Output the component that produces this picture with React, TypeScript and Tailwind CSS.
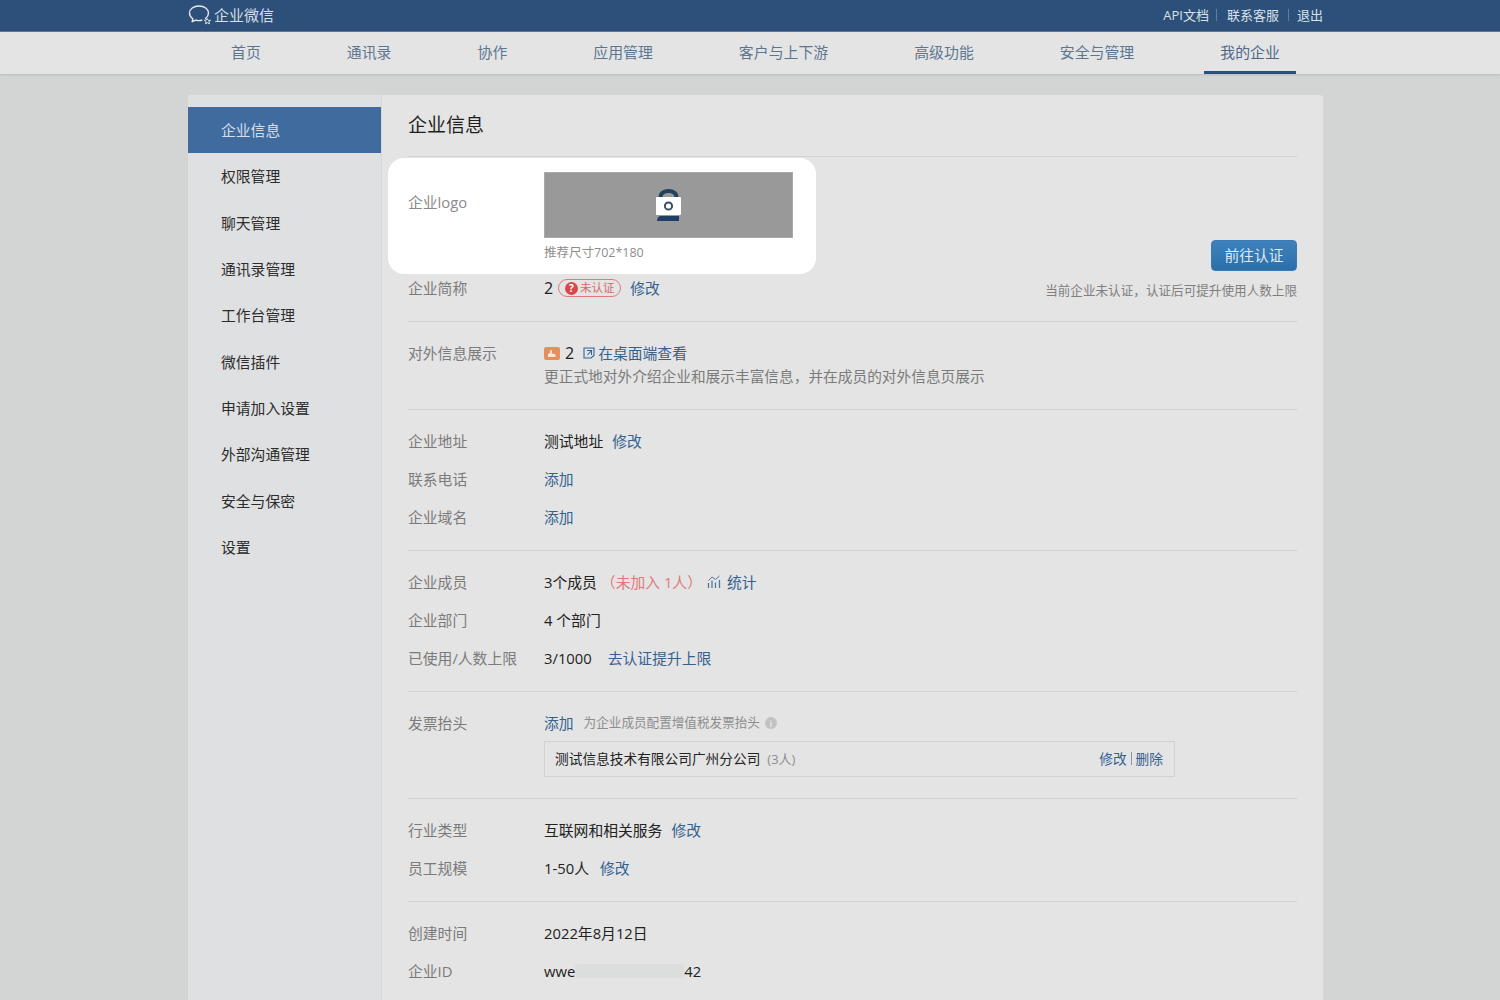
import type { ReactNode } from 'react'

const navItems = ['首页', '通讯录', '协作', '应用管理', '客户与上下游', '高级功能', '安全与管理', '我的企业']
const sideItems = ['企业信息', '权限管理', '聊天管理', '通讯录管理', '工作台管理', '微信插件', '申请加入设置', '外部沟通管理', '安全与保密', '设置']

function Row({ label, children }: { label: string; children: ReactNode }) {
  return (
    <div className="flex h-[38px] items-center">
      <div className="w-[136px] shrink-0 text-[#7b7b7b]">{label}</div>
      <div className="flex items-center text-[#222]">{children}</div>
    </div>
  )
}

function A({ children, className = '' }: { children: ReactNode; className?: string }) {
  return <a className={`text-[#33628f] ${className}`}>{children}</a>
}

function WorkLogo() {
  return (
    <svg width="24" height="22" viewBox="0 0 24 22" fill="none" stroke="#e6ebf1" strokeWidth="1.4" className="shrink-0">
      <path d="M17.5 14.5c2-1.6 3-3.5 3-5.6C20.5 4.900 16.300 2 11 2S1.500 4.900 1.500 9c0 2.300 1.300 4.300 3.300 5.700l-.6 3 3.300-1.600c1.100.3 2.300.5 3.500.5 1 0 1.900-.1 2.800-.3" strokeLinecap="round" strokeLinejoin="round" />
      <path d="M19 14.500l1.500 2 2-.3-1.500 1.600.4 2-1.900-1.100-1.900 1.100.4-2-1.500-1.600 2-.3z" strokeWidth="1" strokeLinejoin="round" />
    </svg>
  )
}

function CameraMark() {
  return (
    <svg width="25" height="32" viewBox="0 0 25 32">
      <path d="M4.500 10V8.500C4.500 4 8 2 12.500 2S20.500 4 20.500 8.500V10" fill="none" stroke="#24405f" strokeWidth="4" />
      <path d="M1 32c0-3 1.500-5 4-5h18v5z" fill="#1f3f64" />
      <rect x="0" y="8" width="25" height="18" rx="1" fill="#fff" />
      <circle cx="12.500" cy="17" r="3.600" fill="none" stroke="#3b4f66" strokeWidth="2" />
    </svg>
  )
}

function ChartIcon() {
  return (
    <svg width="15" height="14" viewBox="0 0 15 14" fill="none" stroke="#54779b" strokeWidth="1.300" className="mr-[5px]">
      <path d="M1.500 13V8M5 13V5.500M8.500 13V7.500M12.500 13V5" />
      <path d="M1.500 5.500L5 2l3.500 2.500L12.500 1" strokeWidth="1" />
    </svg>
  )
}

function LinkOutIcon() {
  return (
    <svg width="12" height="12" viewBox="0 0 12 12" fill="none" stroke="#2f6496" strokeWidth="1.100" className="mr-[3px]">
      <path d="M1 1h10v7.500L8 11H1z" />
      <path d="M4 3.500h4.500V8M8.500 3.500L4.500 8" />
    </svg>
  )
}

function ProfileBadge() {
  return (
    <svg width="16" height="13" viewBox="0 0 16 13" className="mr-[5px]">
      <rect width="16" height="13" rx="2" fill="#e98d5f" />
      <path d="M4 10V7l2-1V3.500L8 3v3.500L11.500 7.500V10z" fill="#fbe6da" />
    </svg>
  )
}

export default function App() {
  return (
    <div className="h-[1000px] overflow-hidden bg-[#d3d5d4] text-[14.8px] leading-[22px] font-['Open_Sans','Noto_Sans_CJK_SC',sans-serif]">
      <header className="h-[32px] bg-[#2c5079] border-b border-[#5b7a9b]">
        <div className="ml-[188px] flex h-[29px] w-[1135px] items-center justify-between">
          <div className="flex items-center gap-[2px] text-[#d5dde6]">
            <WorkLogo />
            <span className="text-[15px]">企业微信</span>
          </div>
          <div className="flex items-center text-[13px] text-[#d9e1ea]">
            <span>API文档</span>
            <span className="mx-[7px] h-[12px] w-px bg-[#5f7d9d]" />
            <span className="ml-[3px]">联系客服</span>
            <span className="ml-[9px] mr-[8px] h-[12px] w-px bg-[#5f7d9d]" />
            <span>退出</span>
          </div>
        </div>
      </header>

      <nav className="flex h-[42px] gap-[54px] bg-[#e4e4e4] pl-[215px] text-[14.9px] shadow-[0_1px_2px_rgba(0,0,0,0.12)]">
        {navItems.map((item) => (
          <a
            key={item}
            className={`flex h-full items-center whitespace-nowrap border-b-[3px] px-4 text-[#5d7690] ${
              item === '我的企业' ? 'border-[#2c5079] text-[#50698a]' : 'border-transparent'
            }`}
          >
            {item}
          </a>
        ))}
      </nav>

      <div className="ml-[188px] mt-[21px] flex h-[905px] w-[1135px] overflow-hidden rounded-t bg-[#e4e4e4]">
        <aside className="w-[194px] shrink-0 border-r border-[#d6d7d8] bg-[#dfe0e1] pt-3">
          {sideItems.map((item, i) => (
            <div
              key={item}
              className={`flex h-[46.3px] items-center pl-[33px] ${i === 0 ? 'bg-[#406b9f] text-[#d5deea]' : 'text-[#2c2c2c]'}`}
            >
              {item}
            </div>
          ))}
        </aside>

        <main className="min-w-0 flex-1 px-[26px]">
          <div className="flex h-[62px] items-center border-b border-[#d0d3d6] pb-[2px] text-[19px] text-[#1f1f1f]">企业信息</div>

          <section className="flex h-[165px] justify-between border-b border-[#d0d3d6]">
            <div>
              <div className="-ml-5 mt-px flex h-[116px] w-[428px] rounded-2xl bg-white pl-5 pt-[14px]">
                <div className="w-[136px] pt-[19px] text-[#8a8a8a]">企业logo</div>
                <div>
                  <div className="flex h-[66px] w-[249px] items-center justify-center border border-[#aaa] bg-[#999]">
                    <CameraMark />
                  </div>
                  <div className="mt-[4px] text-[12.500px] text-[#8d8d8d]">推荐尺寸702*180</div>
                </div>
              </div>
              <div className="flex h-[28px] items-center">
                <div className="w-[136px] text-[#7b7b7b]">企业简称</div>
                <span className="text-[16px] text-[#222]">2</span>
                <span className="ml-[5px] mr-[9px] flex h-[18px] w-[63px] items-center justify-center gap-[2px] rounded-full border border-[#dd7b7b] text-[11.500px] text-[#d9686a]">
                  <span className="flex h-[13px] w-[13px] items-center justify-center rounded-full bg-[#d6484c] text-[10px] font-bold leading-none text-white">?</span>
                  未认证
                </span>
                <A>修改</A>
              </div>
            </div>
            <div className="flex flex-col items-end pt-[83px]">
              <button className="h-[31px] w-[86px] rounded-sm border border-[#3a7cb5] bg-gradient-to-b from-[#3f82bb] to-[#2b6fa9] pb-[1px] text-[#dfe9f2]">前往认证</button>
              <div className="mt-[9px] text-[12.600px] text-[#7f7f7f]">当前企业未认证，认证后可提升使用人数上限</div>
            </div>
          </section>

          <section className="h-[88px] border-b border-[#d0d3d6] pt-[20px]">
            <div className="flex">
              <div className="w-[136px] text-[#7b7b7b]">对外信息展示</div>
              <div>
                <div className="flex h-[22px] items-center">
                  <ProfileBadge />
                  <span className="mr-[9px] text-[16px] text-[#222]">2</span>
                  <LinkOutIcon />
                  <A>在桌面端查看</A>
                </div>
                <div className="mt-[1px] text-[14.700px] text-[#7b7b7b]">更正式地对外介绍企业和展示丰富信息，并在成员的对外信息页展示</div>
              </div>
            </div>
          </section>

          <section className="h-[141px] border-b border-[#d0d3d6] pt-[12px]">
            <Row label="企业地址">
              测试地址<A className="ml-[9px]">修改</A>
            </Row>
            <Row label="联系电话"><A>添加</A></Row>
            <Row label="企业域名"><A>添加</A></Row>
          </section>

          <section className="h-[141px] border-b border-[#d0d3d6] pt-[12px]">
            <Row label="企业成员">
              3个成员
              <span className="ml-[4px] mr-[5px] text-[#dd7a78]">（未加入 1人）</span>
              <ChartIcon />
              <A>统计</A>
            </Row>
            <Row label="企业部门">4 个部门</Row>
            <Row label="已使用/人数上限">
              3/1000<A className="ml-[16px]">去认证提升上限</A>
            </Row>
          </section>

          <section className="h-[107px] border-b border-[#d0d3d6] pt-[12px]">
            <Row label="发票抬头">
              <A>添加</A>
              <span className="ml-[10px] text-[12.600px] text-[#8d8d8d]">为企业成员配置增值税发票抬头</span>
              <span className="ml-[5px] flex h-[12px] w-[12px] items-center justify-center rounded-full bg-[#c2c2c2] text-[9px] leading-none text-white">i</span>
            </Row>
            <div className="-mt-px ml-[136px] flex h-[36px] w-[631px] items-center justify-between border border-[#d0d1d2] pb-[1px] pl-[10px] pr-[11px] text-[13.700px]">
              <div className="text-[#222]">
                测试信息技术有限公司广州分公司<span className="ml-[7px] text-[13px] text-[#8d8d8d]">(3人)</span>
              </div>
              <div className="flex items-center">
                <A>修改</A>
                <span className="mx-[4px] h-[13px] w-px bg-[#7f9ab5]" />
                <A>删除</A>
              </div>
            </div>
          </section>

          <section className="h-[103px] border-b border-[#d0d3d6] pt-[12px]">
            <Row label="行业类型">
              互联网和相关服务<A className="ml-[9px]">修改</A>
            </Row>
            <Row label="员工规模">
              1-50人<A className="ml-[11px]">修改</A>
            </Row>
          </section>

          <section className="pt-[12px]">
            <Row label="创建时间">2022年8月12日</Row>
            <Row label="企业ID">
              wwe<span className="h-[14px] w-[109px] rounded-[3px] bg-[#dcdddd]" />42
            </Row>
          </section>
        </main>
      </div>
    </div>
  )
}
